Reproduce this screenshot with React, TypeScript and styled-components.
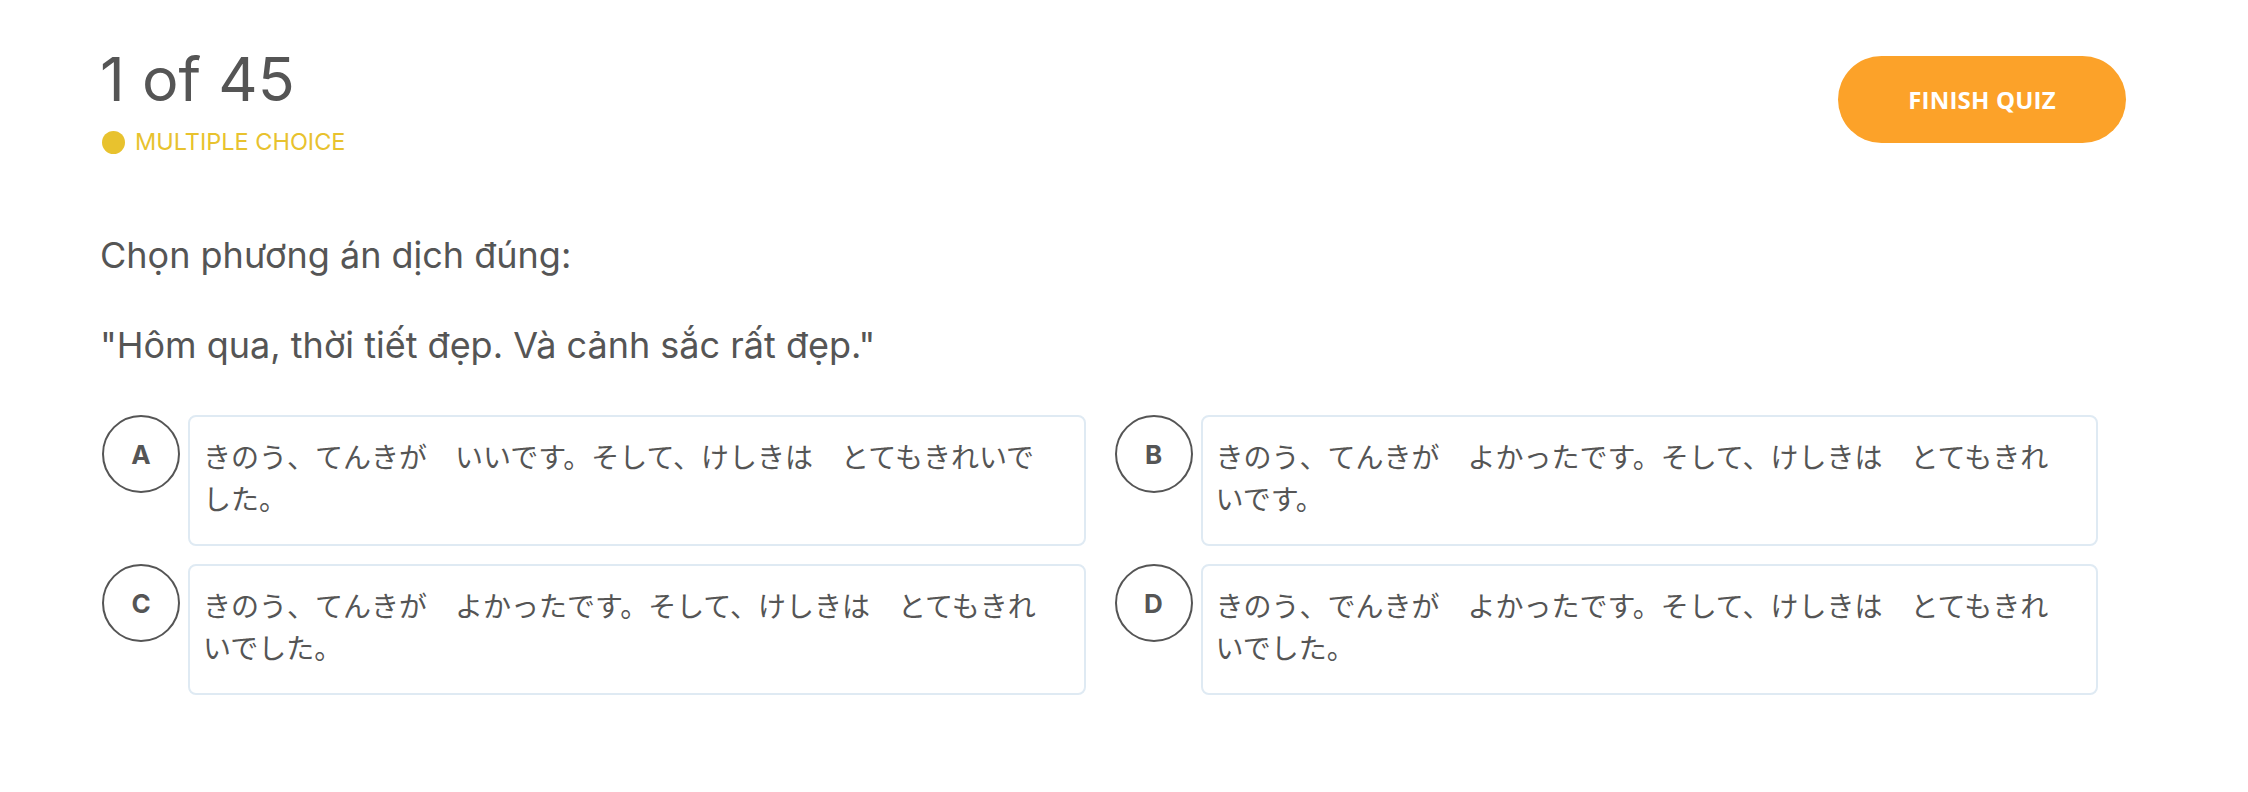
import { createGlobalStyle } from 'styled-components'
import styled from 'styled-components'

const GlobalStyle = createGlobalStyle`
  html, body {
    margin: 0;
    padding: 0;
    background: #ffffff;
  }
  body {
    font-family: Inter, "Noto Sans", "Noto Sans CJK JP", sans-serif;
    color: #555555;
  }
  * {
    box-sizing: border-box;
  }
`

const Page = styled.div`
  padding: 49px 122px 40px 100px;
`

const Header = styled.header`
  display: flex;
  justify-content: space-between;
  align-items: flex-start;
`

const TitleBlock = styled.div`
  display: flex;
  flex-direction: column;
`

const Counter = styled.h1`
  margin: 0;
  font-size: 61px;
  line-height: 60px;
  font-weight: 400;
  color: #555555;
`

const TypeLabel = styled.div`
  display: flex;
  align-items: center;
  gap: 10px;
  margin-top: 18px;
  margin-left: 2px;
  font-size: 23.5px;
  line-height: 30px;
  color: #e8c22e;
  text-transform: uppercase;
`

const Dot = styled.span`
  width: 23px;
  height: 23px;
  border-radius: 50%;
  background: #e8c22e;
`

const FinishButton = styled.button`
  margin-top: 7px;
  width: 288px;
  height: 87px;
  border: none;
  border-radius: 44px;
  background: #fca229;
  color: #ffffff;
  font-family: "Open Sans", "Noto Sans", sans-serif;
  font-weight: 700;
  font-size: 24px;
  letter-spacing: 0.2px;
  padding-bottom: 2px;
  cursor: pointer;
`

const Question = styled.div`
  margin-top: 76px;
`

const QuestionLine = styled.p`
  margin: 0;
  font-size: 36px;
  line-height: 45px;
  color: #555555;

  & + & {
    margin-top: 45px;
  }
`

const Options = styled.div`
  display: grid;
  grid-template-columns: 1fr 1fr;
  column-gap: 29px;
  row-gap: 18px;
  margin: 47px 28px 0 2px;
`

const Option = styled.div`
  display: flex;
  align-items: flex-start;
  gap: 8px;
  cursor: pointer;
`

const Letter = styled.span`
  flex: none;
  width: 78px;
  height: 78px;
  border: 2px solid #555555;
  border-radius: 50%;
  display: flex;
  align-items: center;
  justify-content: center;
  font-size: 26px;
  font-weight: 700;
  color: #555555;
`

const Answer = styled.div`
  flex: 1;
  min-height: 131px;
  padding: 18px 30px 20px 13px;
  border: 2px solid #dfeaf3;
  border-radius: 8px;
  font-family: "Noto Sans CJK JP", "Noto Sans", sans-serif;
  font-size: 28px;
  line-height: 42px;
  color: #555555;
`

const answers = [
  { key: 'A', text: 'きのう、てんきが　いいです。そして、けしきは　とてもきれいでした。' },
  { key: 'B', text: 'きのう、てんきが　よかったです。そして、けしきは　とてもきれいです。' },
  { key: 'C', text: 'きのう、てんきが　よかったです。そして、けしきは　とてもきれいでした。' },
  { key: 'D', text: 'きのう、でんきが　よかったです。そして、けしきは　とてもきれいでした。' },
]

const App = () => {
  return (
    <>
      <GlobalStyle />
      <Page>
        <Header>
          <TitleBlock>
            <Counter>1 of 45</Counter>
            <TypeLabel>
              <Dot />
              Multiple choice
            </TypeLabel>
          </TitleBlock>
          <FinishButton>FINISH QUIZ</FinishButton>
        </Header>
        <Question>
          <QuestionLine>Chọn phương án dịch đúng:</QuestionLine>
          <QuestionLine>"Hôm qua, thời tiết đẹp. Và cảnh sắc rất đẹp."</QuestionLine>
        </Question>
        <Options>
          {answers.map((a) => (
            <Option key={a.key}>
              <Letter>{a.key}</Letter>
              <Answer>{a.text}</Answer>
            </Option>
          ))}
        </Options>
      </Page>
    </>
  )
}

export default App
